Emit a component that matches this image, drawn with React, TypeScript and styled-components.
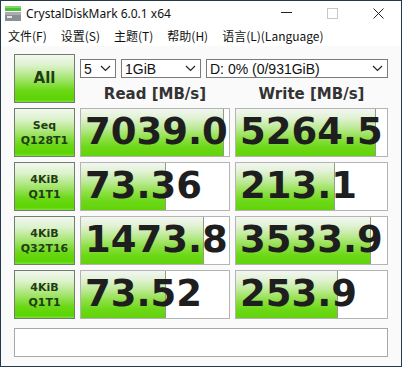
import React from "react";
import styled, { createGlobalStyle } from "styled-components";

const Global = createGlobalStyle`
  html, body { margin: 0; padding: 0; background: #ffffff; }
  * { box-sizing: border-box; }
`;

const Window = styled.div`
  width: 402px;
  height: 367px;
  border: 1px solid #25394a;
  background: #fafafa;
  display: flex;
  flex-direction: column;
  overflow: hidden;
`;

const TitleBar = styled.div`
  height: 24px;
  background: #ffffff;
  display: flex;
  align-items: center;
  padding-left: 4px;
`;

const TitleText = styled.div`
  margin-left: 5px;
  font-family: "Noto Sans", "Noto Sans CJK SC", sans-serif;
  font-size: 12px;
  color: #111;
  flex: 1;
`;

const Controls = styled.div`
  display: flex;
  height: 100%;
`;

const CtrlBtn = styled.div`
  width: 46px;
  height: 100%;
  display: flex;
  align-items: center;
  justify-content: center;
`;

const MenuBar = styled.div`
  height: 21px;
  background: #ffffff;
  display: flex;
  align-items: center;
  gap: 14px;
  padding-left: 7px;
  font-family: "Noto Sans CJK SC", "Noto Sans", sans-serif;
  font-size: 12px;
  color: #111;
`;

const MenuItem = styled.span`
  white-space: nowrap;
`;

const Content = styled.div`
  padding: 8px 0 0 13px;
  display: grid;
  grid-template-columns: 61px 150px 153px;
  grid-auto-rows: 49px;
  column-gap: 5px;
  row-gap: 5px;
`;

const GreenButton = styled.div<{ $big?: boolean }>`
  border: 1px solid #6f7f6c;
  background: linear-gradient(
    to bottom,
    #f2f7ef 0%,
    #dcf2cc 22%,
    #a9e676 48%,
    #6cd818 75%,
    #5ad400 94%,
    #7ee03a 100%
  );
  display: flex;
  flex-direction: column;
  align-items: center;
  justify-content: center;
  font-family: "DejaVu Sans", Verdana, sans-serif;
  font-weight: bold;
  font-size: ${(p) => (p.$big ? "15px" : "11px")};
  line-height: ${(p) => (p.$big ? "1" : "15px")};
  color: #1f3d12;
`;

const TopRight = styled.div`
  grid-column: 2 / 4;
  display: flex;
  flex-direction: column;
`;

const SelectRow = styled.div`
  margin-top: 5px;
  display: flex;
  gap: 5px;
  height: 19px;
`;

const SelectBox = styled.div<{ $w: number }>`
  width: ${(p) => p.$w}px;
  height: 19px;
  border: 1px solid #7a7a7a;
  background: #ffffff;
  display: flex;
  align-items: center;
  justify-content: space-between;
  padding: 0 4px 0 3px;
  font-family: "Liberation Sans", Arial, sans-serif;
  font-size: 14px;
  color: #111;
`;

const HeaderRow = styled.div`
  display: grid;
  grid-template-columns: 150px 153px;
  column-gap: 5px;
  margin-top: 7px;
`;

const Header = styled.div`
  text-align: center;
  font-family: "DejaVu Sans", Verdana, sans-serif;
  font-weight: bold;
  font-size: 15px;
  color: #333333;
  line-height: 18px;
`;

const Cell = styled.div`
  position: relative;
  border: 1px solid #b4b4b4;
  background: #ffffff;
  display: flex;
  align-items: center;
  overflow: hidden;
`;

const Bar = styled.div`
  position: absolute;
  left: 0;
  top: 0;
  bottom: 0;
  border-right: 1px solid #8f9f86;
  background: linear-gradient(
    to bottom,
    #f3f6f1 0%,
    #e2f2d6 18%,
    #bdea96 40%,
    #8ee045 62%,
    #6cd817 82%,
    #62d40a 100%
  );
`;

const Value = styled.span`
  position: relative;
  padding-left: 4px;
  font-family: "DejaVu Sans", Verdana, sans-serif;
  font-weight: bold;
  font-size: 37px;
  line-height: 1;
  color: #1e1e1e;
  white-space: nowrap;
  margin-top: -2px;
`;

const Comment = styled.div`
  margin: 9px 0 0 13px;
  width: 374px;
  height: 29px;
  border: 1px solid #a8a8a8;
  background: #ffffff;
`;

const Chevron = () => (
  <svg width="11" height="7" viewBox="0 0 11 7">
    <path d="M1 1 L5.5 5.5 L10 1" fill="none" stroke="#222" strokeWidth="1.2" />
  </svg>
);

const AppIcon = () => (
  <svg width="16" height="15" viewBox="0 0 16 15">
    <rect x="0" y="0" width="16" height="5" fill="#4fbf3a" />
    <rect x="0" y="0" width="16" height="2" fill="#7fd66a" />
    <rect x="0" y="6" width="16" height="9" fill="#8a8f94" />
    <rect x="0" y="6" width="16" height="3" fill="#a9adb1" />
    <rect x="2" y="10" width="5" height="2" fill="#e6e8ea" />
  </svg>
);

const rows = [
  { label: ["Seq", "Q128T1"], read: "7039.0", rw: 96.7, write: "5264.5", ww: 92.8 },
  { label: ["4KiB", "Q1T1"], read: "73.36", rw: 57.3, write: "213.1", ww: 65.4 },
  { label: ["4KiB", "Q32T16"], read: "1473.8", rw: 83.3, write: "3533.9", ww: 89.5 },
  { label: ["4KiB", "Q1T1"], read: "73.52", rw: 57.3, write: "253.9", ww: 67.3 },
];

export default function App() {
  return (
    <>
      <Global />
      <Window>
        <TitleBar>
          <AppIcon />
          <TitleText>CrystalDiskMark 6.0.1 x64</TitleText>
          <Controls>
            <CtrlBtn>
              <svg width="11" height="2" viewBox="0 0 11 2">
                <rect x="0" y="0" width="11" height="1" fill="#222" />
              </svg>
            </CtrlBtn>
            <CtrlBtn>
              <svg width="11" height="11" viewBox="0 0 11 11">
                <rect x="0.5" y="0.5" width="10" height="10" fill="none" stroke="#c8c8c8" />
              </svg>
            </CtrlBtn>
            <CtrlBtn>
              <svg width="11" height="11" viewBox="0 0 11 11">
                <path d="M0.5 0.5 L10.5 10.5 M10.5 0.5 L0.5 10.5" stroke="#222" strokeWidth="1" />
              </svg>
            </CtrlBtn>
          </Controls>
        </TitleBar>
        <MenuBar>
          <MenuItem>文件(F)</MenuItem>
          <MenuItem>设置(S)</MenuItem>
          <MenuItem>主题(T)</MenuItem>
          <MenuItem>帮助(H)</MenuItem>
          <MenuItem>语言(L)(Language)</MenuItem>
        </MenuBar>
        <Content>
          <GreenButton $big>All</GreenButton>
          <TopRight>
            <SelectRow>
              <SelectBox $w={36}>
                <span>5</span>
                <Chevron />
              </SelectBox>
              <SelectBox $w={80}>
                <span>1GiB</span>
                <Chevron />
              </SelectBox>
              <SelectBox $w={182}>
                <span>D: 0% (0/931GiB)</span>
                <Chevron />
              </SelectBox>
            </SelectRow>
            <HeaderRow>
              <Header>Read [MB/s]</Header>
              <Header>Write [MB/s]</Header>
            </HeaderRow>
          </TopRight>
          {rows.map((r, i) => (
            <React.Fragment key={i}>
              <GreenButton>
                <span>{r.label[0]}</span>
                <span>{r.label[1]}</span>
              </GreenButton>
              <Cell>
                <Bar style={{ width: `${r.rw}%` }} />
                <Value>{r.read}</Value>
              </Cell>
              <Cell>
                <Bar style={{ width: `${r.ww}%` }} />
                <Value>{r.write}</Value>
              </Cell>
            </React.Fragment>
          ))}
        </Content>
        <Comment />
      </Window>
    </>
  );
}
